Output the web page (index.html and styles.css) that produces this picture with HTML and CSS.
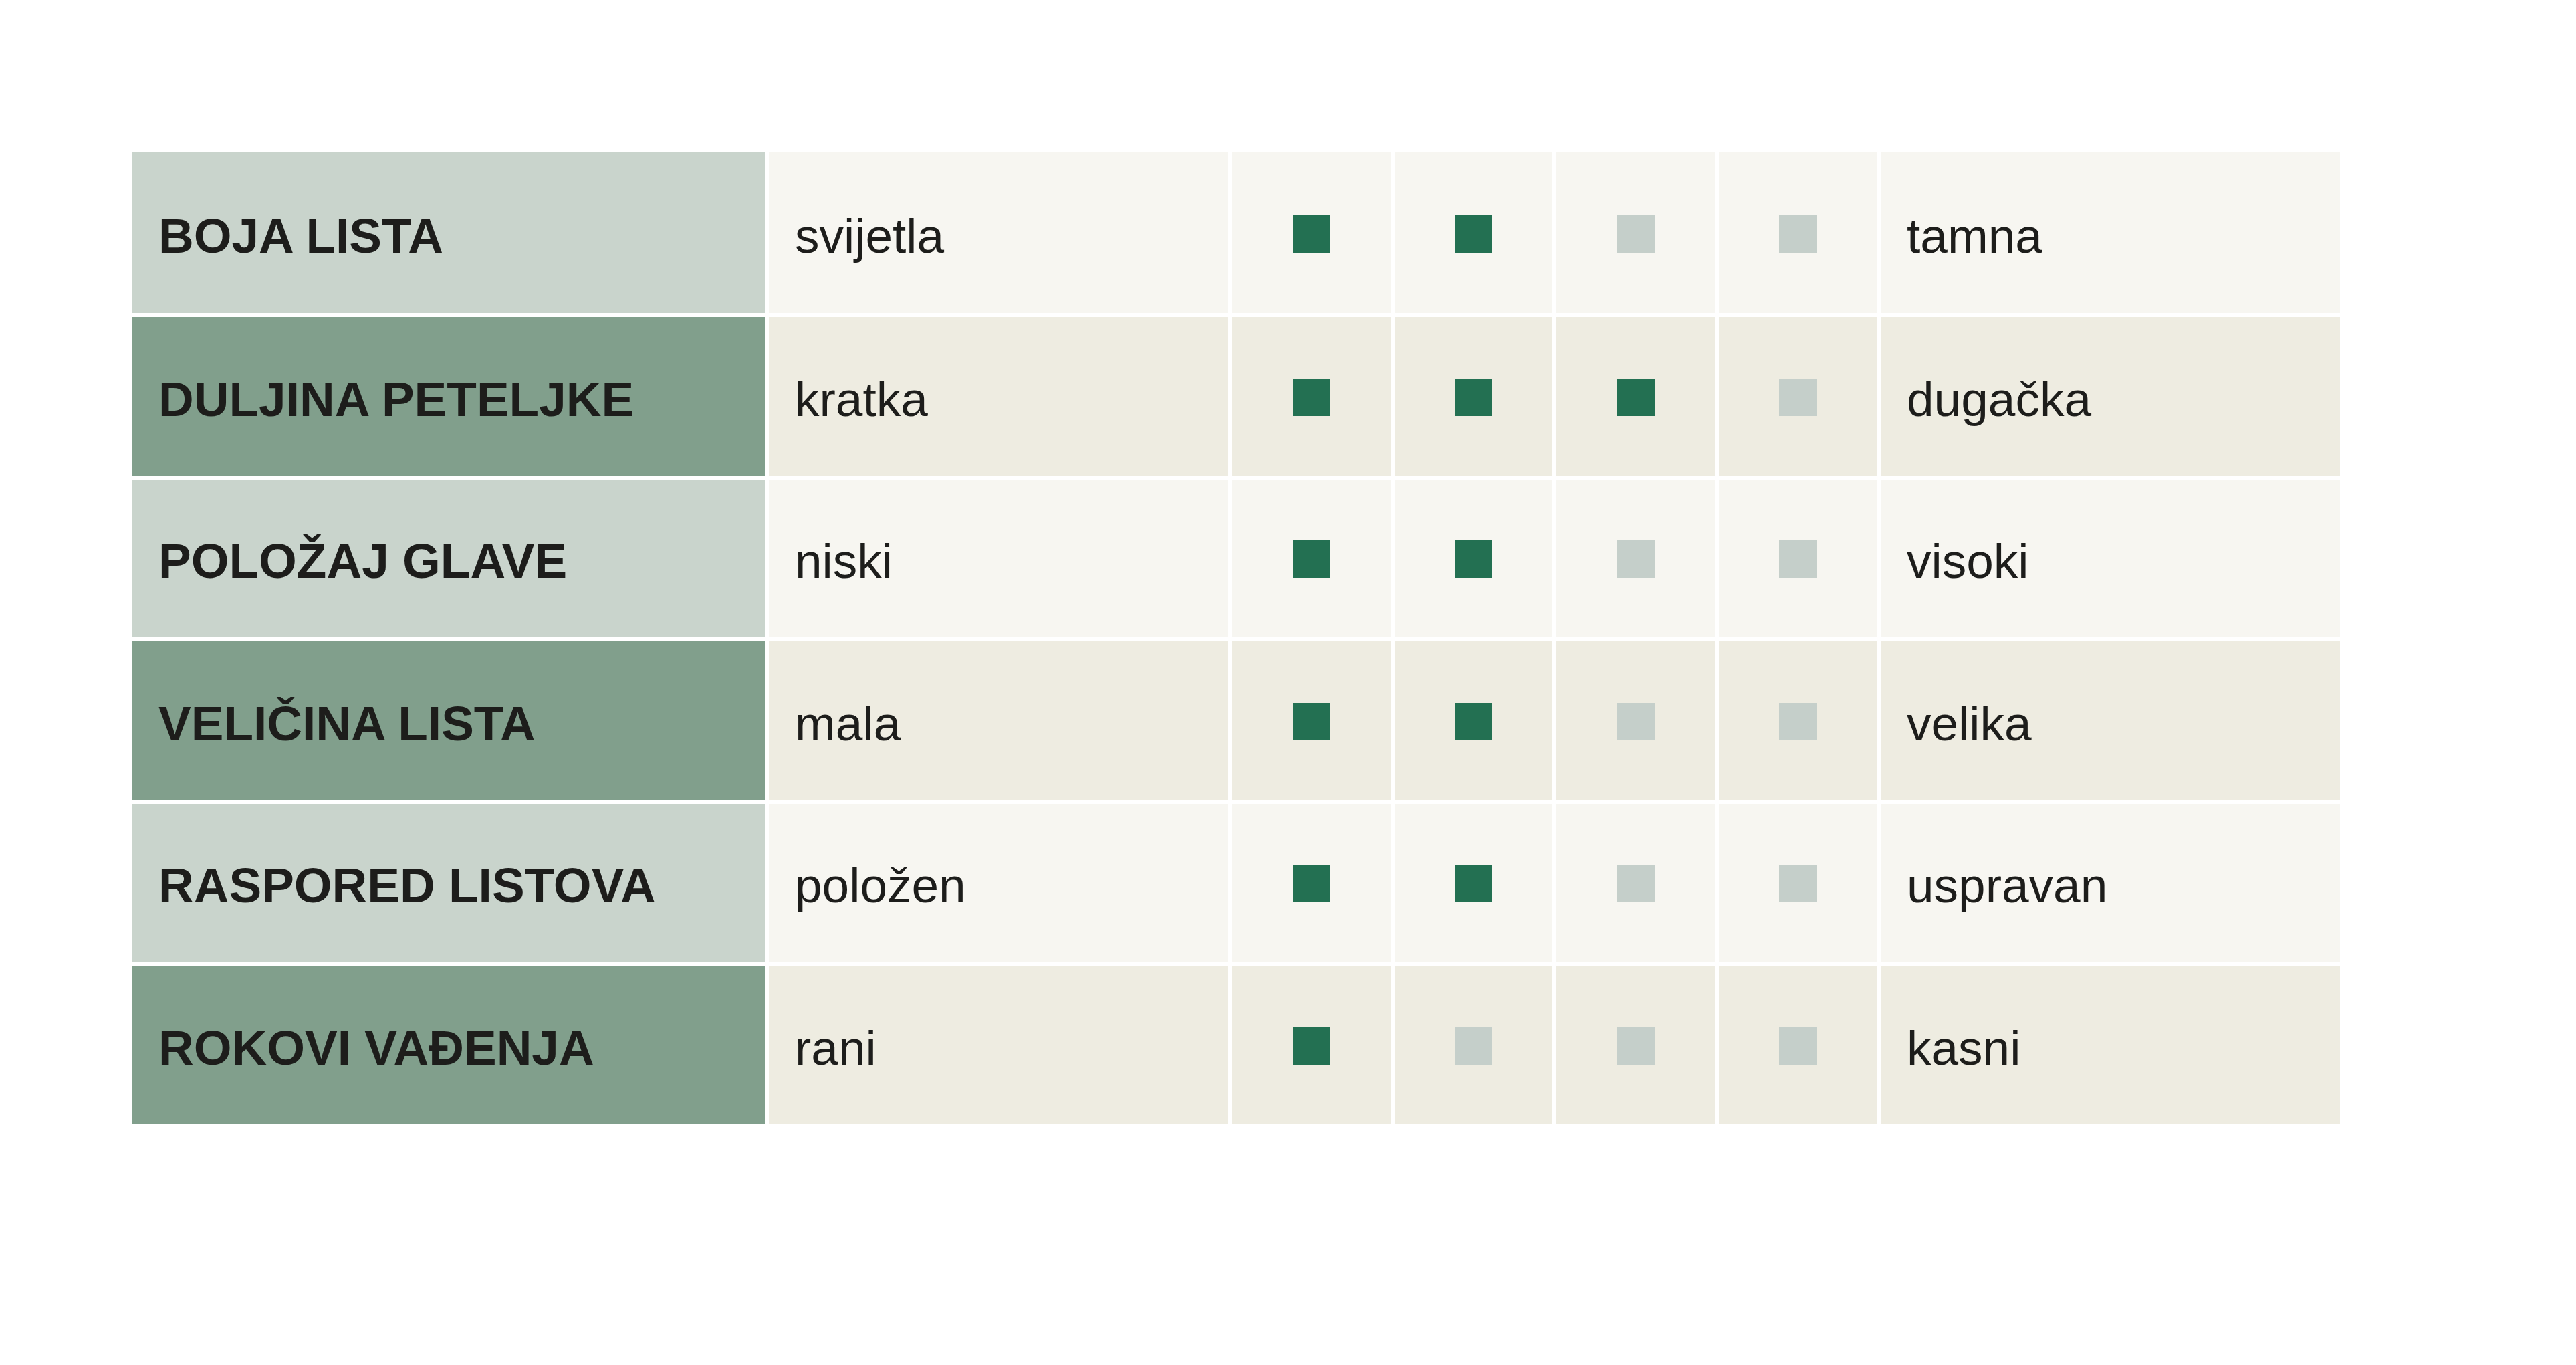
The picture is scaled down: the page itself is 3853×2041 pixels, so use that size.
FILE: index.html
```html
<!DOCTYPE html>
<html lang="hr">
<head>
<meta charset="utf-8">
<title>Svojstva</title>
<link rel="stylesheet" href="styles.css">
</head>
<body>
<div class="table">
  <div class="row row-odd first">
    <div class="label">BOJA LISTA</div>
    <div class="cell text">svijetla</div>
    <div class="cell"><span class="sq on"></span></div>
    <div class="cell"><span class="sq on"></span></div>
    <div class="cell"><span class="sq"></span></div>
    <div class="cell"><span class="sq"></span></div>
    <div class="cell text">tamna</div>
  </div>
  <div class="row row-even">
    <div class="label">DULJINA PETELJKE</div>
    <div class="cell text">kratka</div>
    <div class="cell"><span class="sq on"></span></div>
    <div class="cell"><span class="sq on"></span></div>
    <div class="cell"><span class="sq on"></span></div>
    <div class="cell"><span class="sq"></span></div>
    <div class="cell text">dugačka</div>
  </div>
  <div class="row row-odd">
    <div class="label">POLOŽAJ GLAVE</div>
    <div class="cell text">niski</div>
    <div class="cell"><span class="sq on"></span></div>
    <div class="cell"><span class="sq on"></span></div>
    <div class="cell"><span class="sq"></span></div>
    <div class="cell"><span class="sq"></span></div>
    <div class="cell text">visoki</div>
  </div>
  <div class="row row-even">
    <div class="label">VELIČINA LISTA</div>
    <div class="cell text">mala</div>
    <div class="cell"><span class="sq on"></span></div>
    <div class="cell"><span class="sq on"></span></div>
    <div class="cell"><span class="sq"></span></div>
    <div class="cell"><span class="sq"></span></div>
    <div class="cell text">velika</div>
  </div>
  <div class="row row-odd">
    <div class="label">RASPORED LISTOVA</div>
    <div class="cell text">položen</div>
    <div class="cell"><span class="sq on"></span></div>
    <div class="cell"><span class="sq on"></span></div>
    <div class="cell"><span class="sq"></span></div>
    <div class="cell"><span class="sq"></span></div>
    <div class="cell text">uspravan</div>
  </div>
  <div class="row row-even">
    <div class="label">ROKOVI VAĐENJA</div>
    <div class="cell text">rani</div>
    <div class="cell"><span class="sq on"></span></div>
    <div class="cell"><span class="sq"></span></div>
    <div class="cell"><span class="sq"></span></div>
    <div class="cell"><span class="sq"></span></div>
    <div class="cell text">kasni</div>
  </div>
</div>
</body>
</html>
```

FILE: styles.css
```css
html, body {
  margin: 0;
  padding: 0;
  background: #ffffff;
}

body {
  font-family: "Liberation Sans", Arial, Helvetica, sans-serif;
  color: #1d1d1b;
  padding: 228px 0 0 198px;
}

.table {
  display: flex;
  flex-direction: column;
  gap: 6px;
  width: 3302px;
}

.row {
  display: grid;
  grid-template-columns: 946px 687px 237px 236px 237px 236px 687px;
  column-gap: 6px;
  height: 236.5px;
}

.row.first {
  height: 240px;
}

.label,
.cell {
  display: flex;
  align-items: center;
  font-size: 73px;
  line-height: 1;
}

.label {
  font-weight: 700;
  padding-left: 39px;
  padding-top: 8px;
}

.cell {
  justify-content: center;
}

.cell.text {
  justify-content: flex-start;
  padding-left: 39px;
  padding-top: 8px;
}

.row-odd .label { background: #c9d4cc; }
.row-even .label { background: #819f8c; }
.row-odd .cell { background: #f7f6f1; }
.row-even .cell { background: #eeece1; }

.sq {
  display: block;
  width: 56px;
  height: 56px;
  background: #c5cfca;
  margin-top: 3px;
}

.sq.on {
  background: #237052;
}
```
